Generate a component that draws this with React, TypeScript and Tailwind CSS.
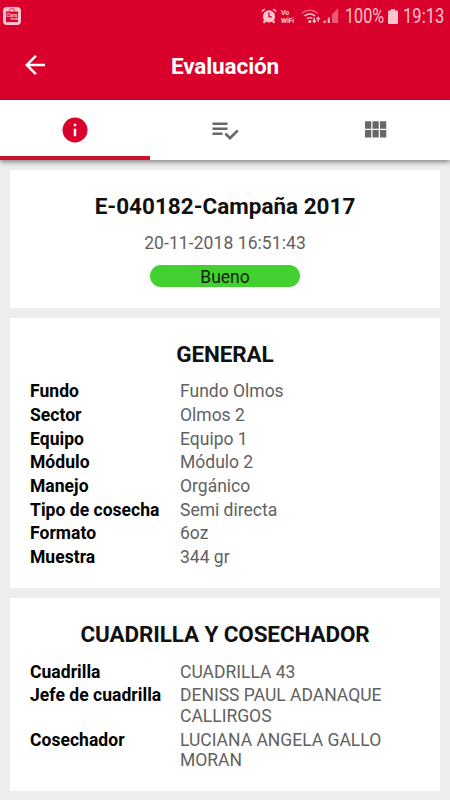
import type { ReactNode } from "react";

type Entry = { label: string; value: string };

const general: Entry[] = [
  { label: "Fundo", value: "Fundo Olmos" },
  { label: "Sector", value: "Olmos 2" },
  { label: "Equipo", value: "Equipo 1" },
  { label: "Módulo", value: "Módulo 2" },
  { label: "Manejo", value: "Orgánico" },
  { label: "Tipo de cosecha", value: "Semi directa" },
  { label: "Formato", value: "6oz" },
  { label: "Muestra", value: "344 gr" },
];

const crew: Entry[] = [
  { label: "Cuadrilla", value: "CUADRILLA 43" },
  { label: "Jefe de cuadrilla", value: "DENISS PAUL ADANAQUE CALLIRGOS" },
  { label: "Cosechador", value: "LUCIANA ANGELA GALLO MORAN" },
];

function StoreIcon() {
  return (
    <svg className="-mt-px h-[18px] w-[18px]" viewBox="0 0 18 18">
      <rect width="18" height="18" rx="4" fill="#ffc3cf" />
      <path d="M6.3 4.5V3.6a2.7 2 0 0 1 5.4 0v.9" fill="none" stroke="#d9304f" strokeWidth="1" />
      <path d="M3 4.5h12v10.600H3z" fill="#d9062f" />
      <text x="9" y="10" textAnchor="middle" fontSize="4.6" fontWeight="700" fill="#ffc3cf">Claro</text>
      <text x="11.3" y="13.3" textAnchor="middle" fontSize="2.8" fontWeight="700" fill="#ffc3cf">tienda</text>
    </svg>
  );
}

function AlarmIcon() {
  return (
    <svg className="h-4 w-4" viewBox="0 0 16 16" fill="#ffc3cf">
      <circle cx="8" cy="8.4" r="6.1" />
      <path d="M.7 4.5A3 3 0 0 1 4.7 1zM15.3 4.5A3 3 0 0 0 11.3 1zM3 12l2 1.8-1.5 1.6-1.6-.9zM13 12l-2 1.8 1.5 1.6 1.6-.9z" />
      <path d="M8 4.6v4.2h3" fill="none" stroke="#d9002b" strokeWidth="1.3" />
    </svg>
  );
}

function WifiIcon() {
  return (
    <svg className="h-4 w-5" viewBox="0 0 20 16" fill="none" stroke="#ffc3cf">
      <path d="M.8 5.5a11.7 11.7 0 0 1 16 0" strokeWidth="1.5" opacity=".45" />
      <path d="M3.5 8a8 8 0 0 1 10.6 0M6 10.7a4.6 4.6 0 0 1 5.4-.2" strokeWidth="1.4" />
      <circle cx="8.8" cy="13.4" r="1.5" fill="#ffc3cf" stroke="none" />
      <path d="M13.3 9.8v4.5M11.7 12.5l1.6 1.8 1.6-1.8M17.2 13.8V9.3M15.6 11.1l1.6-1.8 1.6 1.8" strokeWidth="1.2" />
    </svg>
  );
}

function SignalIcon() {
  return (
    <svg className="h-4 w-4" viewBox="0 0 16 16" fill="#ffc3cf">
      <path d="M.6 13.2 2.5 12v3H.6zM4.7 10.7l2.1-1.6V15H4.7z" />
      <path d="M9 6.3 15.2.3V15H9z" opacity=".45" />
    </svg>
  );
}

function StatusBar() {
  return (
    <div className="flex h-8 items-center justify-between pl-[3px] pr-[6px] text-[#ffc3cf]">
      <StoreIcon />
      <div className="flex items-center">
        <div className="-ml-px flex"><AlarmIcon /></div>
        <div className="ml-[4px] mt-px w-[17px] text-[7px] font-bold leading-[8px] tracking-[-0.2px]">
          <div>Vo</div>
          <div>WiFi</div>
        </div>
        <div className="ml-[3px] flex"><WifiIcon /></div>
        <div className="ml-[2px] flex"><SignalIcon /></div>
        <span className="ml-[6px] mt-px inline-block w-[39px] origin-left scale-x-[0.83] whitespace-nowrap text-[19.5px] leading-8">100%</span>
        <svg className="ml-[4px] h-[15px] w-[10px]" viewBox="0 0 10 15" fill="#ffc3cf">
          <path d="M3 0h4v1.5h2a1 1 0 0 1 1 1V14a1 1 0 0 1-1 1H1a1 1 0 0 1-1-1V2.5a1 1 0 0 1 1-1h2z" />
        </svg>
        <span className="ml-[5px] mt-px inline-block w-[41px] origin-left scale-x-[0.85] whitespace-nowrap text-[19.5px] leading-8">19:13</span>
      </div>
    </div>
  );
}

function Tab({ active = false, children }: { active?: boolean; children: ReactNode }) {
  return (
    <button className={active ? "flex items-center justify-center border-b-4 border-[#cf102c] pt-1" : "flex items-center justify-center"}>
      {children}
    </button>
  );
}

function Details({ title, entries }: { title: string; entries: Entry[] }) {
  return (
    <>
      <h2 className="text-center text-[22.5px] font-bold leading-[26px] tracking-[-0.13px] text-[#111]">{title}</h2>
      <dl className="mt-[14.25px]">
        {entries.map((e) => (
          <div key={e.label} className="grid grid-cols-[150px_1fr] pb-[3.2px] text-[17.5px] leading-[20.5px]">
            <dt className="font-bold tracking-[0.04px] text-black">{e.label}</dt>
            <dd className="pr-4 text-[#616161]">{e.value}</dd>
          </div>
        ))}
      </dl>
    </>
  );
}

export default function App() {
  return (
    <div className="flex h-[800px] w-[450px] flex-col overflow-hidden bg-[#ededed] font-['Roboto',sans-serif]">
      <header className="h-[100px] shrink-0 bg-[#d9002b]">
        <StatusBar />
        <div className="grid h-[68px] grid-cols-[70px_1fr_70px] items-center">
          <svg className="ml-[20px] mt-[-2px] h-[30px] w-[30px]" viewBox="0 0 24 24" fill="#fff">
            <path d="M20 11H7.83l5.59-5.59L12 4l-8 8 8 8 1.41-1.41L7.83 13H20z" />
          </svg>
          <h1 className="text-center text-[22.5px] font-bold leading-[26px] tracking-[-0.1px] text-white">Evaluación</h1>
        </div>
      </header>
      <nav className="z-10 grid h-[60px] shrink-0 grid-cols-3 bg-white shadow-[0_2px_5px_rgba(0,0,0,0.45)]">
        <Tab active>
          <svg className="h-[30px] w-[30px]" viewBox="0 0 24 24" fill="#d9002b">
            <path d="M12 2a10 10 0 1 0 0 20 10 10 0 0 0 0-20zm1 15h-2v-6h2v6zm0-8h-2V7h2v2z" />
          </svg>
        </Tab>
        <Tab>
          <svg className="h-[30px] w-[30px]" viewBox="0 0 24 24" fill="#686868">
            <path d="M14 10H2v2h12v-2zm0-4H2v2h12V6zM2 16h8v-2H2v2zm19.5-4.5L23 13l-6.99 7-4.51-4.5L13 14l3.01 3 5.49-5.5z" />
          </svg>
        </Tab>
        <Tab>
          <svg className="h-[30px] w-[30px]" viewBox="0 0 24 24" fill="#686868">
            <path d="M4 11h5V5H4v6zm0 7h5v-6H4v6zm6 0h5v-6h-5v6zm6 0h5v-6h-5v6zm-6-7h5V5h-5v6zm6-6v6h5V5h-5z" />
          </svg>
        </Tab>
      </nav>
      <main className="flex flex-col gap-[10px] p-[10px]">
        <section className="flex h-[138px] flex-col items-center bg-white pt-[23px]">
          <h2 className="text-[22.5px] font-bold leading-[26px] text-[#111]">E-040182-Campaña 2017</h2>
          <p className="mt-[14px] text-[17.5px] leading-[21px] tracking-[0.08px] text-[#616161]">20-11-2018 16:51:43</p>
          <div className="mt-[10.5px] h-[22.5px] w-[150px] rounded-[11px] bg-[#42d130] text-center text-[17.5px] leading-[24px] text-[#17210f]">Bueno</div>
        </section>
        <section className="h-[270px] bg-white px-5 pt-[23px]">
          <Details title="GENERAL" entries={general} />
        </section>
        <section className="h-[193px] bg-white px-5 pt-[23.4px]">
          <Details title="CUADRILLA Y COSECHADOR" entries={crew} />
        </section>
      </main>
    </div>
  );
}
